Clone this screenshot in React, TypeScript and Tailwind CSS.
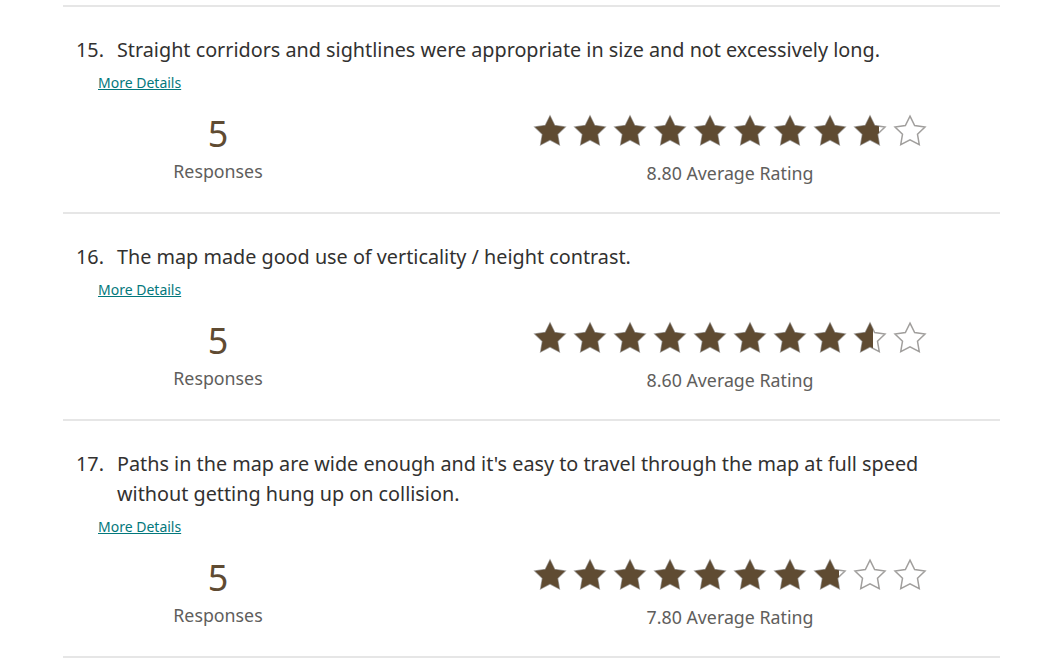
import React from "react";

type Question = {
  num: number;
  text: string;
  responses: number;
  rating: number;
};

const questions: Question[] = [
  {
    num: 15,
    text: "Straight corridors and sightlines were appropriate in size and not excessively long.",
    responses: 5,
    rating: 8.8,
  },
  {
    num: 16,
    text: "The map made good use of verticality / height contrast.",
    responses: 5,
    rating: 8.6,
  },
  {
    num: 17,
    text: "Paths in the map are wide enough and it's easy to travel through the map at full speed without getting hung up on collision.",
    responses: 5,
    rating: 7.8,
  },
];

const STAR = "12,2 15.09,8.26 22,9.27 17,14.14 18.18,21.02 12,17.77 5.82,21.02 7,14.14 2,9.27 8.91,8.26";

function Star({ fill }: { fill: number }) {
  return (
    <div className="relative h-[29px] w-[30px]">
      <svg viewBox="2 2 20 19.2" className="absolute inset-0 h-[29px] w-[30px] overflow-visible">
        <polygon points={STAR} fill="none" stroke="#a19f9d" strokeWidth="1" strokeLinejoin="miter" />
      </svg>
      {fill > 0 && (
        <div className="absolute left-0 top-0 h-[29px] overflow-hidden" style={{ width: `${fill * 100}%` }}>
          <svg viewBox="2 2 20 19.2" className="h-[29px] w-[30px] max-w-none">
            <polygon points={STAR} fill="#5f4b32" />
          </svg>
        </div>
      )}
    </div>
  );
}

function Stars({ rating }: { rating: number }) {
  return (
    <div className="flex gap-[10px]">
      {Array.from({ length: 10 }).map((_, i) => {
        const f = Math.max(0, Math.min(1, rating - i));
        return <Star key={i} fill={f} />;
      })}
    </div>
  );
}

function QuestionBlock({ q }: { q: Question }) {
  return (
    <div className="border-b-2 border-[#e6e6e6] pt-[28px] pb-[27px]">
      <div className="flex pl-[13px] pr-[70px] text-[19.8px] leading-[30px] text-[#323130]">
        <span className="w-[41px] shrink-0">{q.num}.</span>
        <span>{q.text}</span>
      </div>
      <div className="mt-[8px] pl-[35px] text-[14px] leading-[20px]">
        <a href="#" className="text-[#03787c] underline">More Details</a>
      </div>
      <div className="mt-[19px] flex">
        <div className="flex w-[310px] flex-col items-center">
          <div className="text-[36px] leading-[44px] text-[#5f4b32]">{q.responses}</div>
          <div className="mt-[3px] text-[17.8px] leading-[24px] text-[#605e5c]">Responses</div>
        </div>
        <div className="ml-[97px] flex w-[520px] flex-col items-center">
          <div className="mt-[4px]">
            <Stars rating={q.rating} />
          </div>
          <div className="mt-[16px] text-[17.8px] leading-[24px] text-[#605e5c]">
            {q.rating.toFixed(2)} Average Rating
          </div>
        </div>
      </div>
    </div>
  );
}

export default function App() {
  return (
    <div className="min-h-screen bg-white pt-[5px]" style={{ fontFamily: '"Noto Sans", "Open Sans", sans-serif' }}>
      <div className="ml-[63px] w-[937px] border-t-2 border-[#e6e6e6]">
        {questions.map((q) => (
          <QuestionBlock key={q.num} q={q} />
        ))}
      </div>
    </div>
  );
}
